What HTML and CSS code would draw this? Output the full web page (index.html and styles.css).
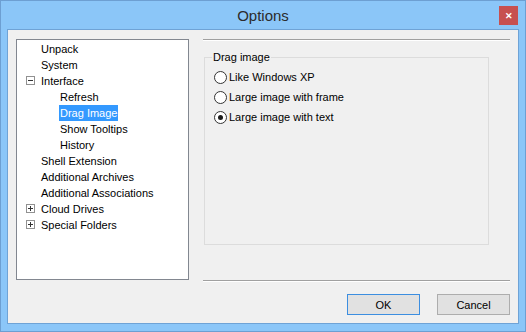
FILE: index.html
```html
<!DOCTYPE html>
<html lang="en">
<head>
    <meta charset="UTF-8">
    <title>Options</title>
    <link rel="stylesheet" href="styles.css">
</head>
<body>
    <div class="window">
        <div class="titlebar">
            <span class="title">Options</span>
            <span class="close">&#x2715;</span>
        </div>
        <div class="client">
            <div class="main">
                <ul class="tree">
                    <li class="node">Unpack</li>
                    <li class="node">System</li>
                    <li class="node"><span class="expander minus"></span>Interface</li>
                    <li class="node child">Refresh</li>
                    <li class="node child"><span class="selected">Drag Image</span></li>
                    <li class="node child">Show Tooltips</li>
                    <li class="node child">History</li>
                    <li class="node">Shell Extension</li>
                    <li class="node">Additional Archives</li>
                    <li class="node">Additional Associations</li>
                    <li class="node"><span class="expander plus"></span>Cloud Drives</li>
                    <li class="node"><span class="expander plus"></span>Special Folders</li>
                </ul>
                <div class="panel">
                    <fieldset class="group">
                        <legend>Drag image</legend>
                        <label class="radio"><span class="dot"></span>Like Windows XP</label>
                        <label class="radio"><span class="dot"></span>Large image with frame</label>
                        <label class="radio"><span class="dot checked"></span>Large image with text</label>
                    </fieldset>
                </div>
            </div>
            <div class="footer">
                <button class="btn default">OK</button>
                <button class="btn">Cancel</button>
            </div>
        </div>
    </div>
</body>
</html>
```

FILE: styles.css
```css
body {
    margin: 0;
    font-family: "Liberation Sans", Arial, sans-serif;
    font-size: 11px;
    color: #000;
}
.window {
    width: 526px;
    height: 332px;
    box-sizing: border-box;
    background-color: #8bc6f8;
    border: 1px solid #6d9fd2;
    padding: 0 6px 7px 6px;
}
.titlebar {
    height: 28px;
    display: flex;
    justify-content: center;
    align-items: center;
    position: relative;
}
.title {
    font-size: 15px;
    color: #2b2b2b;
    margin-top: 1px;
}
.close {
    position: absolute;
    right: 1px;
    top: 5px;
    width: 19px;
    height: 19px;
    background-color: #c75050;
    color: #fff;
    font-size: 9px;
    font-weight: bold;
    display: flex;
    justify-content: center;
    align-items: center;
}
.client {
    height: 295px;
    box-sizing: border-box;
    background-color: #f0f0f0;
    border: 1px solid #6fa3d6;
    padding: 9px 8px 0 8px;
}
.main {
    display: flex;
    align-items: flex-start;
    gap: 14px;
}
.tree {
    list-style: none;
    margin: 0;
    padding: 1px 0;
    width: 173px;
    height: 241px;
    box-sizing: border-box;
    background-color: #fff;
    border: 1px solid #828790;
}
.node {
    height: 16px;
    line-height: 16px;
    padding-left: 24px;
    position: relative;
    white-space: nowrap;
}
.node.child {
    padding-left: 43px;
}
.selected {
    background-color: #3399ff;
    color: #fff;
    margin-left: -1px;
    padding: 0 1px;
    display: inline-block;
}
.expander {
    position: absolute;
    left: 9px;
    top: 3px;
    width: 9px;
    height: 9px;
    box-sizing: border-box;
    border: 1px solid #919191;
    background-color: #fff;
}
.expander::before,
.expander.plus::after {
    content: "";
    position: absolute;
    background-color: #333;
}
.expander::before {
    left: 1px;
    top: 3px;
    width: 5px;
    height: 1px;
}
.expander.plus::after {
    left: 3px;
    top: 1px;
    width: 1px;
    height: 5px;
}
.panel {
    width: 307px;
    height: 242px;
    box-sizing: border-box;
    border-top: 1px solid #a0a0a0;
    border-bottom: 1px solid #a0a0a0;
    box-shadow: inset 0 1px #fff, 0 1px #fff;
    padding: 10px 0 0 1px;
}
.group {
    margin: 0;
    width: 285px;
    height: 195px;
    box-sizing: border-box;
    border: 1px solid #dcdcdc;
    padding: 3px 0 0 9px;
    display: flex;
    flex-direction: column;
}
legend {
    padding: 0 1px;
    margin-left: -2px;
    line-height: 14px;
}
.radio {
    display: flex;
    align-items: center;
    height: 20px;
    gap: 2px;
}
.dot {
    width: 13px;
    height: 13px;
    box-sizing: border-box;
    border: 1px solid #333;
    border-radius: 50%;
    background-color: #fff;
    display: flex;
    justify-content: center;
    align-items: center;
}
.dot.checked::after {
    content: "";
    width: 5px;
    height: 5px;
    border-radius: 50%;
    background-color: #1a1a1a;
}
.footer {
    display: flex;
    justify-content: flex-end;
    gap: 17px;
    margin-top: 13px;
}
.btn {
    width: 73px;
    height: 21px;
    font-family: "Liberation Sans", Arial, sans-serif;
    font-size: 11px;
    background-color: #e1e1e1;
    border: 1px solid #adadad;
    padding: 0;
}
.btn.default {
    border-color: #3c8ee0;
}
```
